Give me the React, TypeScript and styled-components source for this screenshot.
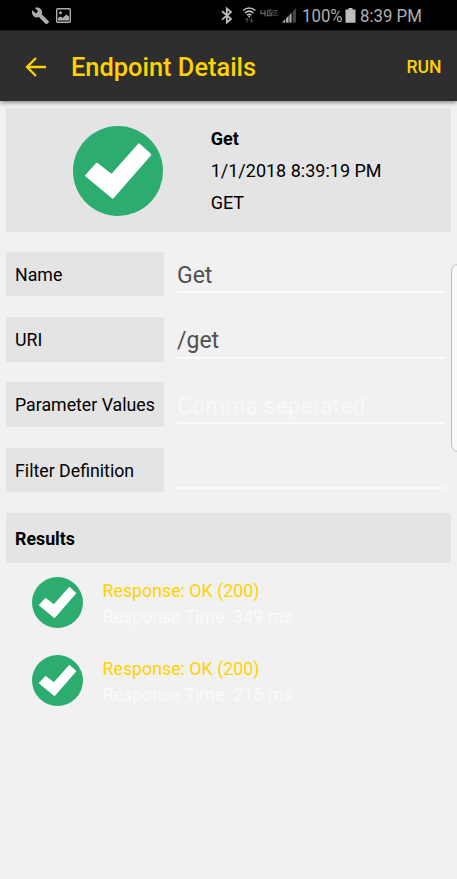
import React from "react";
import styled, { createGlobalStyle } from "styled-components";

const GlobalStyle = createGlobalStyle`
  * { box-sizing: border-box; }
  body { margin: 0; background: #f1f1f1; font-family: Roboto, sans-serif; color: #000; overflow: hidden; }
`;

const Screen = styled.div`
  position: relative;
  height: 879px;
  display: flex;
  flex-direction: column;
  overflow: hidden;
  background: #f1f1f1;
`;

const StatusBar = styled.header`
  height: 30px;
  flex: none;
  background: #000;
  color: #adadad;
  display: flex;
  justify-content: space-between;
  padding: 0 35px 0 32px;
  svg { display: block; flex: none; }
`;

const Notices = styled.div`
  display: flex;
  align-items: center;
  gap: 7px;
`;

const Indicators = styled.div`
  display: flex;
  align-items: center;
`;

const StatusText = styled.span<{ $width: number }>`
  width: ${(p) => p.$width}px;
  font-size: 19px;
  line-height: 30px;
  padding-top: 2px;
  white-space: nowrap;
  flex: none;
  transform: scaleX(0.885);
  transform-origin: left center;
`;

const Toolbar = styled.nav`
  height: 71px;
  flex: none;
  background: #2e2e2e;
  border-top: 1px solid #1c1c1c;
  color: #ffd200;
  display: flex;
  align-items: center;
  padding: 1px 15.5px 0 25px;
  box-shadow: 0 1px 5px rgba(0, 0, 0, 0.55);
`;

const Title = styled.h1`
  margin: 0 0 0 25px;
  flex: 1;
  font-size: 25.4px;
  font-weight: 500;
  line-height: 32px;
  white-space: nowrap;
`;

const RunButton = styled.button`
  border: 0;
  padding: 0;
  background: none;
  color: inherit;
  font: 500 17.6px/24px Roboto, sans-serif;
`;

const Content = styled.main`
  padding: 7px 6px 0;
`;

const Summary = styled.section`
  height: 123.5px;
  background: #e4e4e4;
  display: flex;
  align-items: flex-start;
  padding: 17.5px 0 0 67px;
`;

const SummaryText = styled.div`
  margin: -2.3px 0 0 47.7px;
  font-size: 18px;
  line-height: 31.7px;
`;

const Strong = styled.div`
  font-weight: 700;
`;

const Form = styled.section`
  display: flex;
  flex-direction: column;
  gap: 20.8px;
  padding: 20.5px 0 21px;
`;

const Field = styled.label`
  display: flex;
  height: 44.4px;
  justify-content: space-between;
  padding-right: 6px;
`;

const FieldLabel = styled.span`
  width: 158px;
  background: #e4e4e4;
  padding: 1px 0 0 9px;
  font-size: 17.75px;
  line-height: 45px;
  white-space: nowrap;
`;

const Input = styled.input`
  width: 268px;
  height: 41.4px;
  border: 0;
  border-bottom: 2px solid #fafafa;
  border-radius: 0;
  padding: 8px 0 0;
  background: none;
  outline: none;
  font: 400 23px/30px Roboto, sans-serif;
  color: #505050;
  &::placeholder { color: #f8f8f8; opacity: 1; }
`;

const ResultsHeader = styled.h2`
  margin: 0;
  height: 50.5px;
  background: #e4e4e4;
  padding-left: 9px;
  font-size: 17.8px;
  font-weight: 700;
  line-height: 52px;
`;

const ResultRow = styled.article`
  display: flex;
  height: 78px;
  padding: 14px 0 0 26px;
`;

const ResultText = styled.div`
  margin: 0.6px 0 0 19.5px;
  font-size: 17.8px;
  line-height: 26px;
  color: #fafafa;
`;

const Response = styled.div`
  color: #ffd200;
`;

const EdgeHandle = styled.aside`
  position: absolute;
  left: 451px;
  top: 264px;
  width: 14px;
  height: 188px;
  border: 1px solid #bdbdbd;
  border-radius: 8px;
  background: #f9f9f9;
`;

function Check({ size }: { size: number }) {
  return (
    <svg width={size} height={size} viewBox="0 0 90 90">
      <circle cx="45" cy="45" r="45" fill="#2dac70" />
      <path d="M66 18 77.5 28.7 39.7 72 12.8 49.7 23.7 37.5 38.7 48.8Z" fill="#fff" stroke="#fff" strokeWidth="1.6" strokeLinejoin="round" />
    </svg>
  );
}

function App() {
  const fields = [
    { label: "Name", value: "Get" },
    { label: "URI", value: "/get" },
    { label: "Parameter Values", value: "", hint: "Comma seperated" },
    { label: "Filter Definition", value: "" },
  ];
  return (
    <>
      <GlobalStyle />
      <Screen>
        <StatusBar>
          <Notices>
            <svg width="17" height="17" viewBox="1 1 22 21" fill="#adadad">
              <path d="M22.7 19l-9.1-9.1c.9-2.3.4-5-1.5-6.9-2-2-5-2.4-7.4-1.3L9 6 6 9 1.6 4.7C.4 7.1.9 10.1 2.9 12.1c1.9 1.9 4.6 2.4 6.9 1.5l9.1 9.1c.4.4 1 .4 1.4 0l2.3-2.3c.5-.4.5-1.1.1-1.4z" />
            </svg>
            <svg width="15" height="15" viewBox="0 0 15 15">
              <rect x=".7" y=".7" width="13.6" height="13.6" rx="1" fill="none" stroke="#adadad" strokeWidth="1.4" />
              <path d="M2 12.5V10L4.500 8.500 6.500 10 10.500 6.500 13 8.500V12.500Z" fill="#adadad" />
              <circle cx="4.5" cy="4.8" r="1.5" fill="#adadad" />
            </svg>
          </Notices>
          <Indicators>
            <svg width="81" height="30" viewBox="221 0 81 30">
              <path d="M222 11.200 231 19 226.800 22.500V8.500L231 12 222 19.600" fill="none" stroke="#bcbcbc" strokeWidth="1.8" />
              <g fill="none" stroke="#bcbcbc" strokeWidth="1.6">
                <path d="M243 10.500Q249.200 5.500 255.400 10.500M245 13Q249.200 9.400 253.400 13M247 15.200Q249.200 13.300 251.400 15.200" />
              </g>
              <circle cx="249.200" cy="16.500" r="1" fill="#bcbcbc" />
              <path d="M247 22.500v-4M245.500 20l1.500-1.700 1.500 1.700M251.500 18v4M250 20.500l1.500 1.700 1.500-1.700" fill="none" stroke="#575757" />
              <path d="M261 10v3.500h5M265 10v6.500M271.500 10.500h-3.500l-.8 5h4v-2.500h-2" fill="none" stroke="#5c5c5c" strokeWidth="1.300" />
              <path d="M273 10v5.500h2M273.500 10.500h3.500M275.200 10.500v5M278 15.500h-2M278 10.500h-1.500M278 13h-2" fill="none" stroke="#505050" strokeWidth=".9" />
              <path d="M282 22.500 296 8.300V22.500Z" fill="#444" />
              <path d="M282 22.500 291.500 13V22.500Z" fill="#b0b0b0" />
              <path d="M285.500 15v8M289 12v11M292.200 9v14" stroke="#000" strokeWidth=".8" />
            </svg>
            <StatusText $width={42}>100%</StatusText>
            <svg width="16" height="30" viewBox="0 0 16 30"><path d="M4.500 8h4v1.500h3V22.700H1.500V9.500h3Z" fill="#bdbdbd" /></svg>
            <StatusText $width={62}>8:39 PM</StatusText>
          </Indicators>
        </StatusBar>
        <Toolbar>
          <svg width="21" height="20" viewBox="0 0 21 20" fill="none" stroke="#ffd200" strokeWidth="2.3">
            <path d="M21 10H2M11 1 2 10 11 19" />
          </svg>
          <Title>Endpoint Details</Title>
          <RunButton>RUN</RunButton>
        </Toolbar>
        <Content>
          <Summary>
            <Check size={90} />
            <SummaryText>
              <Strong>Get</Strong>
              <div>1/1/2018 8:39:19 PM</div>
              <div>GET</div>
            </SummaryText>
          </Summary>
          <Form>
            {fields.map((f) => (
              <Field key={f.label}>
                <FieldLabel>{f.label}</FieldLabel>
                <Input defaultValue={f.value} placeholder={f.hint} />
              </Field>
            ))}
          </Form>
          <ResultsHeader>Results</ResultsHeader>
          {[349, 216].map((ms) => (
            <ResultRow key={ms}>
              <Check size={51} />
              <ResultText>
                <Response>Response: OK (200)</Response>
                <div>Response Time: {ms} ms</div>
              </ResultText>
            </ResultRow>
          ))}
        </Content>
        <EdgeHandle />
      </Screen>
    </>
  );
}

export default App;
